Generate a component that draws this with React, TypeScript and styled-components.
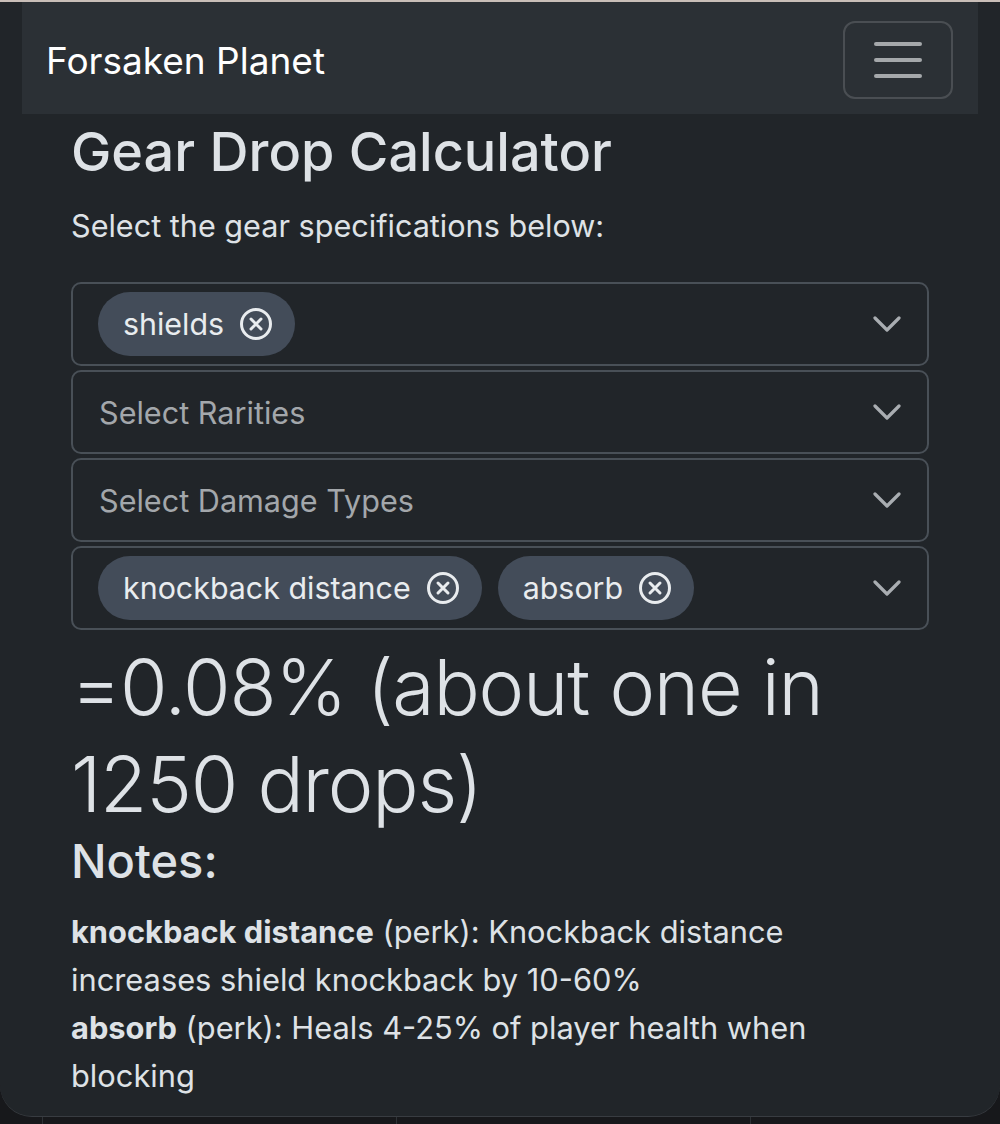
import styled, { createGlobalStyle } from 'styled-components'

const Global = createGlobalStyle`
  html, body {
    margin: 0;
    padding: 0;
    background: #17181b;
  }
  * { box-sizing: border-box; }
  body {
    font-family: Inter, "Noto Sans", "Liberation Sans", sans-serif;
    color: #dee2e6;
  }
`

const Screen = styled.div`
  width: 1000px;
  height: 1124px;
  display: flex;
  flex-direction: column;
  overflow: hidden;
`

const TopStrip = styled.div`
  height: 2px;
  background: #c9beb8;
  flex: none;
`

const Page = styled.div`
  height: 1115px;
  flex: none;
  background: #212529;
  border-bottom: 1px solid #383c41;
  border-radius: 0 0 32px 32px;
  padding: 0 22px;
`

const Navbar = styled.nav`
  height: 112px;
  background: #2b3035;
  display: flex;
  align-items: center;
  justify-content: space-between;
  padding: 4px 25px 0 24px;
`

const Brand = styled.a`
  font-size: 37px;
  color: #fff;
  text-decoration: none;
`

const Toggler = styled.button`
  width: 110px;
  height: 78px;
  background: transparent;
  border: 2px solid rgba(255, 255, 255, 0.15);
  border-radius: 12px;
  display: flex;
  flex-direction: column;
  align-items: center;
  justify-content: center;
  gap: 12px;
  padding: 0;
`

const Bar = styled.span`
  width: 48px;
  height: 4px;
  border-radius: 2px;
  background: #a5a8ab;
`

const Container = styled.main`
  padding: 8px 49px 0;
`

const Title = styled.h2`
  margin: 0 0 20px;
  font-size: 54px;
  font-weight: 500;
  line-height: 60px;
  color: #dee2e6;
`

const Lead = styled.p`
  margin: 0 0 32px;
  font-size: 30.6px;
  line-height: 48px;
`

const SelectList = styled.div`
  display: flex;
  flex-direction: column;
  gap: 4px;
`

const SelectBox = styled.div`
  height: 84px;
  border: 2px solid #495057;
  border-radius: 10px;
  background: #212529;
  display: flex;
  align-items: center;
  padding: 0 26px 0 25px;
`

const Chips = styled.div`
  flex: 1;
  display: flex;
  align-items: center;
  gap: 16px;
`

const Chip = styled.span`
  height: 64px;
  display: inline-flex;
  align-items: center;
  gap: 15px;
  padding: 0 22px 0 25px;
  border-radius: 32px;
  background: #434c59;
  color: #e9ecef;
  font-size: 30.4px;
`

const Placeholder = styled.span`
  flex: 1;
  padding-left: 1px;
  font-size: 30.6px;
  color: #a3a7ab;
`

const Result = styled.div`
  margin-top: 9px;
  font-size: 77px;
  font-weight: 300;
  letter-spacing: -1.2px;
  line-height: 97px;
  color: #dee2e6;
`

const NotesTitle = styled.h3`
  margin: 2px 0 21px;
  font-size: 47px;
  font-weight: 500;
  line-height: 52px;
`

const Note = styled.p`
  margin: 0;
  font-size: 30.8px;
  line-height: 48px;
  b { font-weight: 700; }
`

const Below = styled.div`
  flex: 1;
  display: grid;
  grid-template-columns: 43px 354px 354px 354px;
`

const Col = styled.div<{ $line?: boolean }>`
  border-right: 1px solid ${p => (p.$line ? '#2e3236' : 'transparent')};
`

const ClearIcon = () => (
  <svg width="34" height="34" viewBox="0 0 34 34" fill="none" stroke="#e9ecef" strokeWidth="3" strokeLinecap="round">
    <circle cx="17" cy="17" r="14.5" />
    <path d="M12 12 L22 22 M22 12 L12 22" />
  </svg>
)

const Chevron = () => (
  <svg width="28" height="16" viewBox="0 0 28 16" fill="none" stroke="#a9adb1" strokeWidth="3.2" strokeLinecap="round" strokeLinejoin="round">
    <path d="M2 2 L14 14 L26 2" />
  </svg>
)

const Select = ({ chips, placeholder }: { chips?: string[]; placeholder?: string }) => (
  <SelectBox>
    {chips ? (
      <Chips>
        {chips.map(c => (
          <Chip key={c}>
            {c}
            <ClearIcon />
          </Chip>
        ))}
      </Chips>
    ) : (
      <Placeholder>{placeholder}</Placeholder>
    )}
    <Chevron />
  </SelectBox>
)

export default function App() {
  return (
    <Screen>
      <Global />
      <TopStrip />
      <Page>
        <Navbar>
          <Brand href="#">Forsaken Planet</Brand>
          <Toggler aria-label="Toggle navigation">
            <Bar />
            <Bar />
            <Bar />
          </Toggler>
        </Navbar>
        <Container>
          <Title>Gear Drop Calculator</Title>
          <Lead>Select the gear specifications below:</Lead>
          <SelectList>
            <Select chips={['shields']} />
            <Select placeholder="Select Rarities" />
            <Select placeholder="Select Damage Types" />
            <Select chips={['knockback distance', 'absorb']} />
          </SelectList>
          <Result>=0.08% (about one in 1250 drops)</Result>
          <NotesTitle>Notes:</NotesTitle>
          <Note>
            <b>knockback distance</b> (perk): Knockback distance increases shield knockback by 10-60%
          </Note>
          <Note>
            <b>absorb</b> (perk): Heals 4-25% of player health when blocking
          </Note>
        </Container>
      </Page>
      <Below>
        <Col $line />
        <Col $line />
        <Col $line />
        <Col />
      </Below>
    </Screen>
  )
}
